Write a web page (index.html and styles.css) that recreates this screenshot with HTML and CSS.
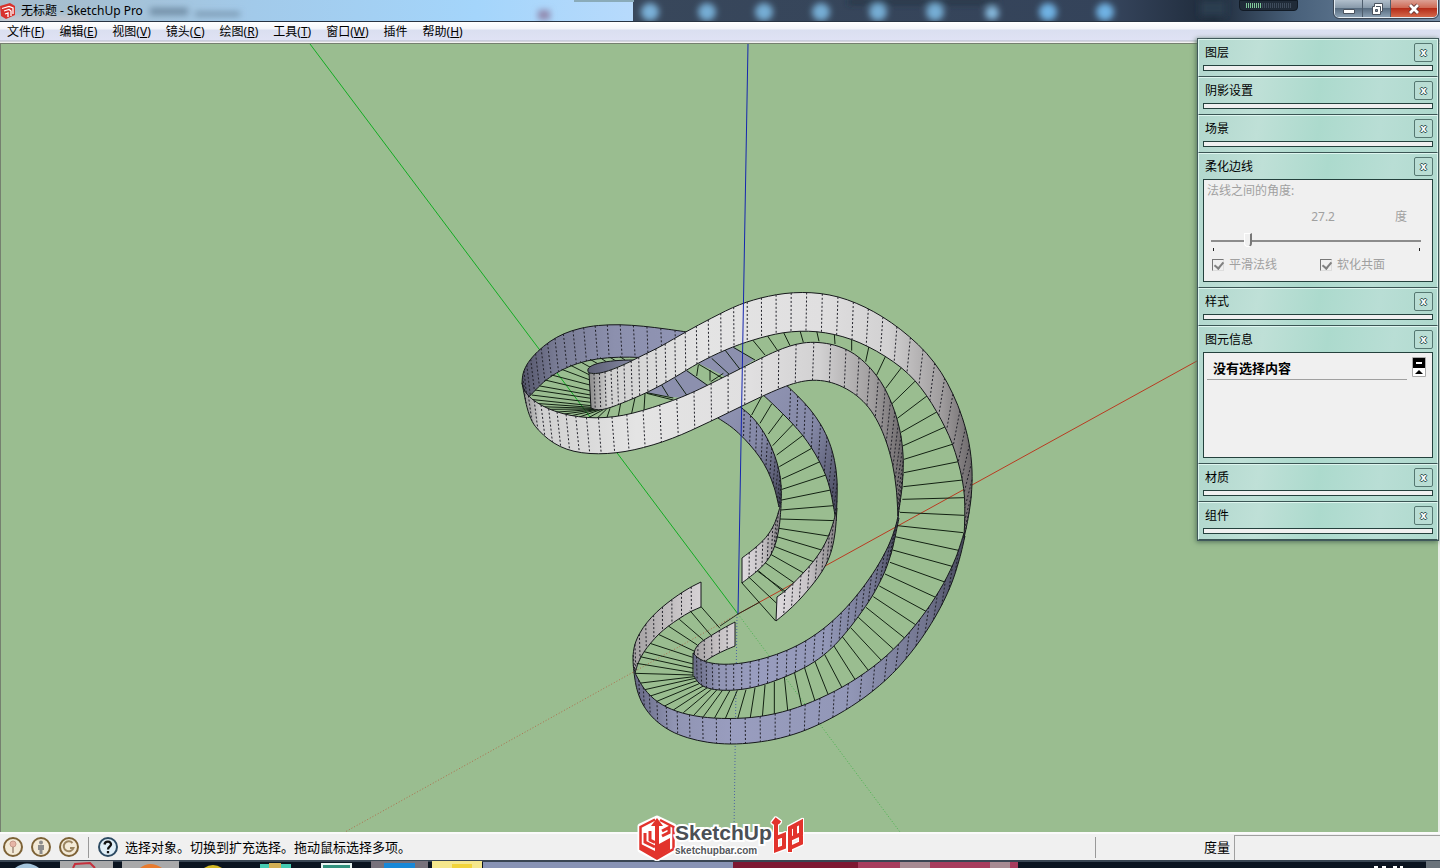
FILE: index.html
```html
<!DOCTYPE html>
<html lang="zh-CN">
<head>
    <meta charset="UTF-8">
    <meta name="viewport" content="width=device-width, initial-scale=1.0">
    <title>无标题 - SketchUp Pro</title>
    <link rel="stylesheet" href="styles.css">
</head>
<body>
    <header class="titlebar">
        <svg class="glass" viewBox="0 0 1440 21" preserveAspectRatio="xMinYMin slice" aria-hidden="true">
            <defs>
                <linearGradient id="sky"><stop offset="0" stop-color="#a7bdcb"/><stop offset=".14" stop-color="#a5bfd2"/><stop offset=".4" stop-color="#a2caea"/><stop offset=".75" stop-color="#a4d5fb"/><stop offset="1" stop-color="#b7dafc"/></linearGradient>
                <linearGradient id="night"><stop offset="0" stop-color="#38475b"/><stop offset=".6" stop-color="#34435a"/><stop offset=".72" stop-color="#1f2b3b"/><stop offset=".82" stop-color="#49617b"/><stop offset="1" stop-color="#7890a8"/></linearGradient>
                <filter id="soft" x="-50%" y="-50%" width="200%" height="200%"><feGaussianBlur stdDeviation="3"/></filter>
            </defs>
            <rect width="634" height="21" fill="url(#sky)"/>
            <rect x="633" width="807" height="21" fill="url(#night)"/>
            <rect x="574" width="60" height="2" fill="#8aabb9"/>
            <g filter="url(#soft)">
                <path d="M0 16h90v8H0z" fill="#c9cbd0"/>
                <path d="M150 8h38v7h-38zM195 12h45v4h-45z" fill="#6f8ca4"/>
                <path d="M538 10h12v10h-12z" fill="#9189ae"/>
                <path d="M848 0h150v4H848z" fill="#22303f"/>
                <circle cx="650" cy="12" r="9" fill="#7ab1d8"/><circle cx="707" cy="12" r="9" fill="#76add4"/>
                <circle cx="764" cy="12" r="9" fill="#76add4"/><circle cx="821" cy="12" r="9" fill="#76add4"/>
                <circle cx="878" cy="12" r="9" fill="#76add4"/><circle cx="935" cy="12" r="9" fill="#76add4"/>
                <circle cx="992" cy="13" r="7" fill="#86b9dd"/><circle cx="1048" cy="12" r="9" fill="#6fb2e4"/>
                <circle cx="1105" cy="12" r="9" fill="#6fb2e4"/>
                <path d="M1200 0h26v16h-26z" fill="#2c3d50"/>
            </g>
        </svg>
        <svg class="app-icon" width="16" height="16" viewBox="0 0 16 16" aria-hidden="true">
            <path d="M0 3 10 0l5 3v9l-9 4-5-3z" fill="#d8322c"/>
            <path d="M2 5.500 9 3.500l4 1.500v6M4 8l5-1.500L11 8v5M5 11l3-1v4" fill="none" stroke="#fff" stroke-width="1.300"/>
        </svg>
        <h1>无标题 - SketchUp Pro</h1>
        <div class="meter"><i></i></div>
        <div class="window-buttons">
            <button aria-label="最小化"><svg width="14" height="14" viewBox="0 0 14 14"><path d="M1.500 7.500h11v4h-11z" fill="#fff" stroke="#49525e"/></svg></button>
            <button aria-label="还原"><svg width="14" height="14" viewBox="0 0 14 14"><path d="M4.500 1.500h8v8h-2v3h-8v-8h2z" fill="#fff" stroke="#49525e"/><path d="M5.500 7.500h2v2h-2z" fill="#8090a0" stroke="#49525e"/><path d="M6 4.500h4.500V9" fill="none" stroke="#49525e"/></svg></button>
            <button class="quit" aria-label="关闭"><svg width="14" height="14" viewBox="0 0 14 14"><path d="m3 3 8 8M11 3l-8 8" stroke="#5b3030" stroke-width="4.500"/><path d="m3 3 8 8M11 3l-8 8" stroke="#fff" stroke-width="2.800"/></svg></button>
        </div>
    </header>

    <nav class="menu">
        <button>文件(<u>F</u>)</button>
        <button>编辑(<u>E</u>)</button>
        <button>视图(<u>V</u>)</button>
        <button>镜头(<u>C</u>)</button>
        <button>绘图(<u>R</u>)</button>
        <button>工具(<u>T</u>)</button>
        <button>窗口(<u>W</u>)</button>
        <button>插件</button>
        <button>帮助(<u>H</u>)</button>
    </nav>

    <main class="viewport">
        <svg id="model" class="model" viewBox="1 44 1440 788" preserveAspectRatio="xMinYMin slice" role="img" aria-label="模型">
            <defs>
                <linearGradient id="g-start" x1="0" x2="1"><stop offset="0" stop-color="#a3a0a1"/><stop offset=".5" stop-color="#c0bcbe"/><stop offset="1" stop-color="#d6d2d5"/></linearGradient>
                <linearGradient id="g-end" x1="0" x2="1"><stop offset="0" stop-color="#dedade"/><stop offset=".5" stop-color="#c9c5c8"/><stop offset="1" stop-color="#858284"/></linearGradient>
                <linearGradient id="g-bottom" x1="0" x2="1"><stop offset="0" stop-color="#666883"/><stop offset=".12" stop-color="#9094b3"/><stop offset=".3" stop-color="#999dbf"/><stop offset=".65" stop-color="#9297b7"/><stop offset=".88" stop-color="#72758f"/><stop offset="1" stop-color="#45475a"/></linearGradient>
                <linearGradient id="g-top" x1="0" x2="1"><stop offset="0" stop-color="#8a8a8a"/><stop offset=".05" stop-color="#d0d0d0"/><stop offset=".3" stop-color="#e4e4e4"/><stop offset=".6" stop-color="#e0dfe0"/><stop offset=".78" stop-color="#d2d1d2"/><stop offset=".92" stop-color="#a09d9e"/><stop offset="1" stop-color="#6d696b"/></linearGradient>
                <linearGradient id="g-back" x1="0" x2="1"><stop offset="0" stop-color="#54556a"/><stop offset=".2" stop-color="#787b94"/><stop offset=".55" stop-color="#8c90ae"/><stop offset="1" stop-color="#9094b4"/></linearGradient>
                <linearGradient id="g-return" x1="0" x2="1" y1="0" y2="1"><stop offset="0" stop-color="#9195b4"/><stop offset=".5" stop-color="#8488a6"/><stop offset="1" stop-color="#424356"/></linearGradient>
                <linearGradient id="g-curl" x1="0" x2="1"><stop offset="0" stop-color="#5d5f74"/><stop offset="1" stop-color="#8488a3"/></linearGradient>
            </defs>
            <g class="axis">
                <path class="red" d="M738 614 1440 227"/>
                <path class="green" d="M310 44 738 614"/>
                <path class="red faint" d="M738 614 345 832"/>
                <path class="green faint" d="M738 614 900 832"/>
                <path class="blue faint" d="M737 614 734 832"/>
            </g>
            <g id="stairs"></g>
            <g class="axis">
                <path class="blue" d="M748 44 738 614"/>
                <path class="seam" d="M720 626 738 614 760 602"/>
            </g>
        </svg>

        <aside class="panels">
            <section class="panel">
                <header><h2>图层</h2><button aria-label="关闭图层">x</button></header>
                <div class="body"></div>
            </section>
            <section class="panel">
                <header><h2>阴影设置</h2><button aria-label="关闭阴影设置">x</button></header>
                <div class="body"></div>
            </section>
            <section class="panel">
                <header><h2>场景</h2><button aria-label="关闭场景">x</button></header>
                <div class="body"></div>
            </section>
            <section class="panel">
                <header><h2>柔化边线</h2><button aria-label="关闭柔化边线">x</button></header>
                <div class="body soften">
                    <label for="angle">法线之间的角度:</label>
                    <div class="angle"><output for="angle">27.2</output><span>度</span></div>
                    <input type="range" id="angle" min="0" max="180" value="29" disabled>
                    <div class="ticks"><i></i><i></i></div>
                    <div class="checks">
                        <label><input type="checkbox" checked disabled>平滑法线</label>
                        <label><input type="checkbox" checked disabled>软化共面</label>
                    </div>
                </div>
            </section>
            <section class="panel">
                <header><h2>样式</h2><button aria-label="关闭样式">x</button></header>
                <div class="body"></div>
            </section>
            <section class="panel">
                <header><h2>图元信息</h2><button aria-label="关闭图元信息">x</button></header>
                <div class="body info">
                    <h3>没有选择内容</h3>
                    <button class="fold" aria-label="隐藏详细信息"><svg width="14" height="20" viewBox="0 0 14 20"><path d="M.5.5h13v19H.5z" fill="#fff" stroke="#aaa"/><path d="M1 1h12v10H1z"/><path d="M4 5h6v2H4z" fill="#fff"/><path d="m7 13 4 4H3z"/></svg></button>
                </div>
            </section>
            <section class="panel">
                <header><h2>材质</h2><button aria-label="关闭材质">x</button></header>
                <div class="body"></div>
            </section>
            <section class="panel">
                <header><h2>组件</h2><button aria-label="关闭组件">x</button></header>
                <div class="body"></div>
            </section>
        </aside>
    </main>

    <footer class="status">
        <button aria-label="地理位置"><svg width="22" height="22" viewBox="0 0 22 22"><circle cx="11" cy="11" r="9" fill="#f3ead7" stroke="#7d6236" stroke-width="2"/><circle cx="11" cy="8" r="3" fill="#e6b6a6" stroke="#c89a8a"/><path d="M11 11v6" stroke="#a08a78" stroke-width="1.500"/></svg></button>
        <button aria-label="作者"><svg width="22" height="22" viewBox="0 0 22 22"><circle cx="11" cy="11" r="9" fill="#f3ead7" stroke="#7d6236" stroke-width="2"/><circle cx="11" cy="6.500" r="2" fill="#8c8c8c"/><path d="M8 9h6v5h-1.500v4h-3v-4H8z" fill="#8c8c8c"/></svg></button>
        <button aria-label="登录"><svg width="22" height="22" viewBox="0 0 22 22"><circle cx="11" cy="11" r="9" fill="#f3ead7" stroke="#7d6236" stroke-width="2"/><path d="M14.500 7a5 5 0 1 0 1 5H12" fill="none" stroke="#9b8560" stroke-width="2"/></svg></button>
        <i class="rule"></i>
        <button aria-label="帮助"><svg width="22" height="22" viewBox="0 0 22 22"><circle cx="11" cy="11" r="9" fill="#dfeef7" stroke="#2c4a62" stroke-width="2"/><path d="M7.500 8.500C8 4.500 14.500 5 14 8.700c-.3 2-3 2.200-3 4.800M11 15v2.300" fill="none" stroke="#111" stroke-width="2.300"/></svg></button>
        <p>选择对象。切换到扩充选择。拖动鼠标选择多项。</p>
        <i class="rule"></i>
        <label for="measure">度量</label>
        <input type="text" id="measure">
        <svg class="logo" width="168" height="46" viewBox="0 0 168 46">
            <path d="M20 3 37 11V35L20 44 3 35V11z" fill="#fff" stroke="#fff" stroke-width="5" stroke-linejoin="round"/>
            <path d="M18 4.500 3.500 12v22L20 43.500 36.500 34V12L23 5" fill="none" stroke="#e2332c" stroke-width="2.500"/>
            <path d="M20 3 26 11H22V29L33 23V35L20 43 4 34V29L18 36V11H14z" fill="#e2332c"/>
            <path d="M8 18v9l10 5M13 16v9l5 2.500M25 16l7-3.500v5L25 21" fill="none" stroke="#e2332c" stroke-width="3"/>
            <g class="mark">
                <path d="M139 6v29l8-3V20l-8 3M136 9l3-4 4 3"/>
                <path d="M153 37V13l11-6v12l-11 5M164 18v10l-11 5M158 11v10"/>
            </g>
            <text class="brand" x="38" y="25">SketchUp</text>
            <text class="site" x="38" y="39">sketchupbar.com</text>
        </svg>
    </footer>

    <div class="taskbar">
        <svg viewBox="0 0 1440 8" preserveAspectRatio="xMinYMin slice" aria-hidden="true">
            <rect width="1440" height="8" fill="#0b1420"/>
            <path d="M0 1h1440" stroke="#687785"/>
            <path d="M15 8q12-9 24 0z" fill="#a5c5dc"/>
            <path d="M60 1h53v7H60zM122 1h57v7h-57z" fill="#a9a9aa"/>
            <path d="m73 8 2-4 15-1 5 5" fill="none" stroke="#c62f3c" stroke-width="2"/>
            <path d="M140 8q10-8 22 0z" fill="#e87b2e"/><path d="M204 8q9-6 18 0z" fill="#d5ba24"/>
            <path d="M260 4h31v4h-31z" fill="#45cbb2"/><path d="M269 3h12v5h-12z" fill="#d2ae55"/>
            <path d="M321 3h31v5h-31z" fill="#e8f5f2"/><path d="M323 5h27v3h-27z" fill="#32927e"/>
            <path d="M371 1h57v7h-57z" fill="#77717b"/><path d="M384 3h31v5h-31z" fill="#1888d8"/>
            <path d="M432 1h50v7h-50z" fill="#f5e78c"/><path d="M452 4h20v4h-20z" fill="#f2d43b"/>
            <path d="M483 2h250v6H483z" fill="#8893b5"/><path d="M733 2h125v6H733z" fill="#7d1832"/>
            <path d="M858 2h160v6H858z" fill="#a73c5d"/><path d="M900 2h30v6h-30zM990 2h20v6h-20z" fill="#a68a92"/>
            <path d="M1374 7h4m4 0h4m7 0h4m3 0h3" stroke="#fff" stroke-width="2"/>
            <path d="M1426 1h14v7h-14z" fill="#6a737b"/>
        </svg>
    </div>

    <script src="model.js"></script>
</body>
</html>
```
FILE: styles.css
```css
*{margin:0; padding:0; box-sizing:border-box;}
body{height:100vh; display:flex; flex-direction:column; overflow:hidden; background:#f0f0f0; color:#000; font:12px/16px "Noto Sans", "Noto Sans CJK SC", sans-serif;}
button{font:inherit; color:inherit; background:none; border:none;}
svg{display:block;}

.titlebar{position:relative; display:flex; align-items:center; height:22px; gap:5px; border-bottom:1px solid #283443;}
.glass{position:absolute; left:0; top:0; width:100%; height:21px; z-index:-1;}
.titlebar h1{font-size:12px; font-weight:normal; flex:1;}
.meter{align-self:flex-start; width:59px; height:11px; margin-right:31px; padding:2px 6px; background:#202b38; border:1px solid #111a25; border-radius:0 0 4px 4px;}
.meter i{display:block; height:5px; background:linear-gradient(90deg, #7fc89a 16px, #3e4b5b 16px); -webkit-mask:repeating-linear-gradient(90deg, #000 0 1px, transparent 1px 2px); mask:repeating-linear-gradient(90deg, #000 0 1px, transparent 1px 2px);}
.window-buttons{display:flex; align-self:flex-start; height:18px; margin-right:2px; border:1px solid #e3ebf2; border-top:none; border-radius:0 0 5px 5px; outline:1px solid #3b4654; overflow:hidden;}
.window-buttons button{width:28px; display:flex; justify-content:center; align-items:center; border-right:1px solid #4e5d6d; background:linear-gradient(#b1bfcc, #8496a7 50%, #586c80 50%, #8ba0b3);}
.window-buttons .quit{width:46px; border:none; background:linear-gradient(#dca094, #cf6a55 45%, #b52d19 50%, #d4684a);}

.menu{display:flex; height:21px; padding-left:7px; gap:15px; background:linear-gradient(#fff 0, #f3f5fa 7px, #dadff0 8px, #dfe2f4 18px, #b4b7c5 19px, #f2f2f2 20px);}
.menu button{height:19px; line-height:18px; white-space:nowrap;}

.viewport{flex:1; min-height:0; position:relative; border:1px solid #75806f; border-width:1px 2px 0 1px; border-right-color:#e9ede8; background:#9abd90;}
.model{width:100%; height:100%;}
.axis path{fill:none; stroke-width:1;}
.axis .red{stroke:#b93a20;}
.axis .green{stroke:#12ac22;}
.axis .blue{stroke:#1526ae;}
.axis .faint{stroke-dasharray:1 2; opacity:.6;}
.axis .seam{stroke:#2b2f20;}
.face{stroke:none;}
.edge{fill:none; stroke:#15181a; stroke-width:1;}
.crease{fill:none; stroke:#202028; stroke-width:1; stroke-dasharray:2 2;}
.tread{fill:none; stroke:#122112; stroke-width:1;}

.panels{position:absolute; top:-6px; right:-1px; width:242px; border:1px solid #40595b; box-shadow:-1px 1px 5px #52705a;}
.panel{padding:0 4px 5px; border:1px solid #def6ef; border-bottom:1px solid #3b5554; background:linear-gradient(100deg, #b2d8ce, #bfe0d7 25%, #acdacd 50%, #b9ded5 75%, #aed9cd);}
.panel header{display:flex; justify-content:space-between; align-items:center; height:25px; padding-left:2px;}
.panel h2{font-size:12px; font-weight:normal;}
.panel header button{width:19px; height:19px; border:1px solid #557771; border-radius:2px; background:#b9ddd4; color:#fff; font:bold 10px/14px "DejaVu Sans", sans-serif; text-shadow:1px 0 #355, -1px 0 #355, 0 1px #355, 0 -1px #355;}
.body{border:1px solid #24413d; background:#f0f0f0; min-height:6px;}
.soften{display:flex; flex-direction:column; height:103px; padding:3px; color:#a0a0a0;}
.angle{display:flex; justify-content:flex-end; gap:60px; padding:10px 22px 8px 0;}
.soften input[type="range"]{appearance:none; -webkit-appearance:none; width:210px; height:16px; margin-left:4px; background:linear-gradient(#8c8c8c, #8c8c8c) 0 7px/100% 2px no-repeat;}
.soften input[type="range"]::-webkit-slider-thumb{-webkit-appearance:none; width:8px; height:14px; background:#f0f0f0; border:1px solid #fff; border-right:2px solid #777; border-radius:0 0 5px 5px;}
.ticks{display:flex; justify-content:space-between; margin:1px 9px 0 6px;}
.ticks i{width:1px; height:3px; background:#222;}
.checks{display:flex; gap:43px; padding:6px 5px;}
.checks label{display:flex; align-items:center; gap:5px;}
.checks input{appearance:none; -webkit-appearance:none; width:12px; height:12px; border:1px solid #ddd; border-top-color:#777; border-left-color:#777; position:relative;}
.checks input:checked::after{content:""; position:absolute; left:3px; top:0; width:4px; height:7px; border:solid #808080; border-width:0 2px 2px 0; transform:rotate(40deg);}
.info{display:flex; align-items:flex-start; gap:5px; height:106px; padding:4px 6px 4px 3px;}
.info h3{flex:1; font-size:13px; line-height:22px; padding-left:6px; border-bottom:1px solid #a0a0a0;}

.status{position:relative; display:flex; align-items:center; gap:6px; height:28px; padding-left:2px; border-top:2px solid #fbfbfb; background:#f0f0f0; font-size:13px;}
.status p{flex:1;}
.rule{width:1px; height:21px; margin:0 2px; background:#999;}
.status label{width:126px; text-align:right;}
.status input{width:206px; height:25px; margin-left:-2px; padding:0 4px; font:inherit; border:1px solid #a0a0a0; border-right:none; border-bottom:none; background:#f0f0f0;}
.logo{position:absolute; left:calc(50% - 83px); top:-19px;}
.brand{font:bold 21px "Liberation Sans", sans-serif; fill:#4b4f55; stroke:#fff; stroke-width:4; paint-order:stroke;}
.site{font:bold 10px "Liberation Sans", sans-serif; fill:#55585c; stroke:#fff; stroke-width:3; paint-order:stroke;}
.mark path{fill:none; stroke:#e2332c; stroke-width:4;}
.mark{filter:drop-shadow(1px 0 0 #fff) drop-shadow(-1px 0 0 #fff) drop-shadow(0 1px 0 #fff) drop-shadow(0 -1px 0 #fff);}
.taskbar{height:8px; overflow:hidden; background:#0b1420;}
.taskbar svg{width:100%; height:8px;}
```
FILE: model.js
```js
const stairs = document.getElementById('stairs');

function add(cl, d, fill){
    const p = document.createElementNS('http://www.w3.org/2000/svg', 'path');
    p.setAttribute('class', cl);
    p.setAttribute('d', d);
    if(fill) p.setAttribute('fill', fill);
    stairs.appendChild(p);
    return p;
}

// "x,y x,y" -> [[x, y], ...]
function pts(s){
    return s.trim().split(/\s+/).map(p => p.split(',').map(Number));
}

// evens out rounding in a list of points, the ends stay
function relax(p){
    return p.map((q, i) => i == 0 || i == p.length - 1 ? q : [0, 1].map(k => q[k] / 2 + (p[i - 1][k] + p[i + 1][k]) / 4));
}

// smooth curve through the points, without the leading M
function curve(p){
    let d = p[0].join(' ');
    for(let i = 0; i < p.length - 1; i++){
        const a = p[i - 1] || p[i], b = p[i], c = p[i + 1], e = p[i + 2] || c;
        d += ` C${b[0] + (c[0] - a[0]) / 6} ${b[1] + (c[1] - a[1]) / 6} ${c[0] - (e[0] - b[0]) / 6} ${c[1] - (e[1] - b[1]) / 6} ${c[0]} ${c[1]}`;
    }
    return d;
}

// value of a list at t = 0..1
function at(list, t){
    const f = Math.min(Math.max(t, 0), .9999) * (list.length - 1), i = Math.floor(f);
    return list.length == 1 ? list[0] : list[i] + (list[i + 1] - list[i]) * (f - i);
}

// wall between two edges; gaps = distance between creases along the first edge,
// leans = sideways run of a crease for one pixel towards the second edge
function band(fill, gaps, leans, one, two, side = 1){
    const a = relax(pts(one)), b = relax(pts(two));
    add('face', 'M' + curve(a) + ' L' + curve(b.slice().reverse()) + 'Z', fill);
    const ea = add('edge', 'M' + curve(a));
    const eb = add('edge', 'M' + curve(b));
    const la = ea.getTotalLength(), lb = eb.getTotalLength();
    const far = [];
    for(let s = 0; s <= lb; s += .5) far.push(eb.getPointAtLength(s));
    let d = '';
    for(let s = at(gaps, 0); s < la - 2; s += at(gaps, s / la)){
        const p = ea.getPointAtLength(s), lean = at(leans, s / la);
        let best = null, min = 2;
        for(const q of far){
            const down = (q.y - p.y) * side;
            if(down < 0 || down > 46) continue;
            const off = Math.abs(q.x - p.x - down * lean);
            if(off < min){
                min = off;
                best = q;
            }
        }
        if(best) d += `M${p.x} ${p.y}L${best.x} ${best.y}`;
    }
    add('crease', d);
}

// treads are measured at three times the size, from the corner x, y
function treads(x, y, s){
    const p = pts(s).map(q => [x + q[0] / 3, y + q[1] / 3]);
    let d = '';
    for(let i = 0; i < p.length; i += 2) d += 'M' + p[i].join(' ') + 'L' + p[i + 1].join(' ');
    add('tread', d);
}

// far side of the left loop
band('url(#g-back)', [6, 8, 11, 13, 14, 15], [.1, .12, .1, .06, .04, .05],
    '522,383 522,373 527,363 537,351 550,341 563,333 580,328 597,325 620,324 643,326 667,329 687,332',
    '526,398 530,397 535,390 545,380 560,370 577,363 597,358 617,357 642,357 665,359 690,363');
treads(510, 280, `330,230 345,240 300,232 318,243 270,233 290,246 240,238 265,252 210,245 245,264
    180,255 237,284 155,268 240,300 125,285 240,315 105,300 240,332 90,318 242,345 75,330 243,355
    65,345 243,367 60,358 243,377 75,370 245,382 90,380 247,385 110,388 250,387 130,397 253,388
    155,403 258,389 180,408 265,389 205,412 272,389 232,415 280,389 260,416 290,387 290,415 300,385
    325,408 332,370 365,400 375,353 402,390 405,340`);

// walls seen between the two upper ribbons
add('face', 'M646 393L687 370 712 388 684 398 672 397Z', '#8c90ae');
add('face', 'M698 363L733 346 754 360 736 371 728 378Z', '#8c90ae');
treads(510, 280, `410,338 490,354 530,272 605,325 565,252 640,296 565,255 560,288 600,270 600,302
    640,280 602,305 670,202 735,240 645,210 690,268 605,235 660,285 495,295 530,345 455,315 475,348
    410,340 490,360`);

// right hand return, inner wall then outer wall
band('url(#g-return)', [8, 10, 10, 9, 8], [-.02, -.05, -.1, -.15],
    '738,405 752,415 760,427 768,438 775,455 780,472 782,487 781,507',
    '718,418 733,427 740,435 750,444 760,457 768,470 775,487 779,507');
band('url(#g-return)', [9, 13, 16, 17, 17], [-.03, -.05, -.12, -.2],
    '784,383 797,395 810,408 822,425 830,442 835,460 838,480 837,500 836,521',
    '760,392 772,403 783,414 793,424 803,435 812,448 820,462 826,475 831,490 833,505 836,521');
band('url(#g-end)', [9, 9, 8, 7], [0, -.02, -.05, -.1],
    '742,558 753,550 768,537 775,525 780,507', '742,583 758,571 767,562 773,552 777,540 780,525 781,507');
treads(740, 280, `35,405 65,350 60,430 95,372 85,462 130,402 98,497 160,432 110,525 190,465 118,560 215,505
    125,597 240,545 126,628 258,585 125,660 272,630 122,690 280,677 120,717 287,722 117,745 265,768
    110,770 245,810 105,800 220,845 92,823 193,880 75,848 165,910 52,873 137,935`);
treads(620, 540, '365,128 467,243 385,110 470,190 415,92 490,155');
band('url(#g-end)', [10, 12, 13, 13, 12], [-.05, -.07, -.08, -.1],
    '777,597 783,593 792,585 802,574 813,563 822,550 828,538 833,525 836,512',
    '776,621 787,612 798,602 808,590 818,578 827,565 832,550 836,533 837,508');
add('edge', 'M742 558v25M777 597l-1 24');

// lower flight
band('url(#g-start)', [11, 12, 12, 11, 9], [.01, 0, .03, .05],
    '701,582 690,587 678,595 667,603 656,612 647,622 639,633 634,645 632,657 634,673',
    '701,607 690,611 679,619 668,626 658,634 651,643 643,652 638,662 635,673');
treads(740, 280, `38,180 75,225 82,167 113,212 130,156 150,197 180,152 190,187 230,153 237,184 283,163 285,192
    335,178 335,212 387,198 377,245 437,228 410,285 485,262 437,325 527,302 455,372 562,347 472,415
    592,395 483,457 617,440 488,498 640,492 492,538 655,545 492,578 668,600 490,620 673,653 487,658
    672,706 480,697 670,758 472,737`);
treads(780, 500, `540,152 345,110 520,200 338,150 497,247 330,187 467,292 315,222 440,335 298,258
    408,375 280,290 375,415 258,322 340,447 235,352 305,482 212,383 268,515 187,410 228,543 160,435
    187,565 132,460 145,585 103,480 105,603 72,498 65,618 43,515 23,630 13,530`);
treads(620, 540, `463,523 463,425 427,532 435,435 390,538 405,443 352,540 378,449 315,538 352,451
    283,535 330,451 250,530 308,450 222,525 290,450 190,518 275,447 160,510 262,443 130,500 250,438
    108,485 240,430 85,470 232,422 70,450 225,415 55,430 222,410 45,400 220,405 50,370 220,398
    60,350 220,385 72,335 220,372 90,310 218,352 115,283 222,333 145,258 232,315 178,238 250,300
    210,212 272,285 243,200 300,265`);
band('url(#g-start)', [9, 9, 8, 6], [.01],
    '735,622 725,627 717,632 709,637 702,641 696,646 693,653 694,660',
    '735,646 725,650 715,655 708,659 703,663 698,666 695,666 694,662');
add('edge', 'M701 582v25M735 622v24');
band('url(#g-bottom)', [5, 8, 10, 11, 12, 12, 13, 13], [.03, 0, -.03, -.06, -.1, -.15, -.2],
    '693,653 698,659 707,663 723,665 743,664 767,658 787,651 807,641 827,627 847,608 863,588 877,568 887,550 893,535 897,523 899,511',
    '694,676 697,682 703,687 713,690 730,691 750,689 770,683 793,674 815,663 833,648 845,634 858,617 873,597 885,573 892,553 895,537 899,518');
add('edge', 'M693 653V676');
band('url(#g-bottom)', [8, 13, 15, 16, 16, 16, 16, 17], [.05, .02, 0, -.05, -.1, -.15, -.15],
    '635,673 643,690 657,703 675,712 700,718 728,719 760,718 790,711 820,699 850,684 882,662 905,638 927,612 945,582 957,558 964,533',
    '634,673 636,690 642,705 653,720 670,732 687,738 707,743 730,745 755,743 780,739 807,731 837,716 867,697 893,675 917,647 937,615 952,587 960,558 965,536');

// upper flight, outer ribbon
add('face', 'M589 373C583 366 600 360 634 360L603 373Z', 'url(#g-curl)');
add('edge', 'M589 373C583 366 600 360 634 360');
band('url(#g-top)', [5, 10, 14, 15, 16, 17, 18, 18, 17, 14], [.04, .02, .01, 0, -.04, -.1, -.18, -.25, -.3],
    '589,373 595,374 603,373 613,369 627,364 638,357 650,352 662,346 673,339 686,332 698,325 712,318 725,311 740,304 753,300 768,296 785,293 802,292 820,293 838,296 857,303 873,311 892,322 910,337 927,352 942,372 953,393 963,417 970,443 973,470 972,497 968,520 964,538',
    '591,408 595,410 602,410 610,408 622,403 635,398 648,392 662,385 675,377 687,370 698,363 712,356 725,350 740,344 753,340 767,336 783,332 800,331 817,331 834,334 852,339 868,346 885,356 902,367 915,380 927,395 937,412 945,427 953,443 958,462 963,480 965,497 965,515 964,538');
add('edge', 'M589 373 591 408');

// upper flight, inner ribbon round the left loop
band('url(#g-top)', [7, 10, 17, 19, 19, 18, 15, 12, 13, 13], [.15, .1, .06, .03, 0, -.02, -.05, -.1, -.15, -.2],
    '522,383 523,391 531,399 542,406 553,411 570,416 587,418 605,418 623,416 642,411 663,404 683,397 698,390 718,380 740,369 763,357 776,351 789,346 803,342 817,342 835,344 852,351 865,362 877,375 885,388 892,403 897,418 902,437 904,460 903,487 898,516',
    '522,383 527,412 532,422 538,430 548,440 560,447 573,452 590,454 607,454 625,452 643,448 663,442 682,435 700,426 718,418 740,407 762,396 783,387 797,382 813,379 828,381 843,386 857,395 870,407 878,422 887,440 893,465 897,487 898,516');
```
